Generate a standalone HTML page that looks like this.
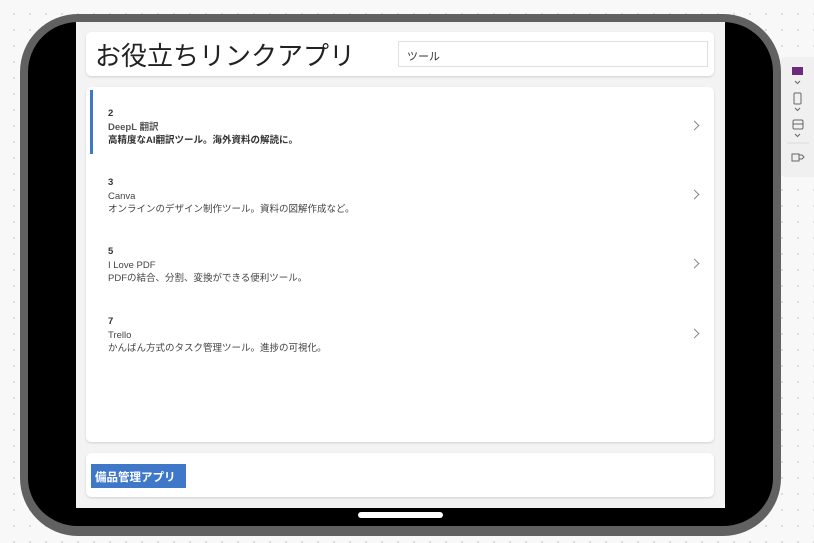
<!DOCTYPE html>
<html><head><meta charset="utf-8"><style>
*{margin:0;padding:0;box-sizing:border-box}
body{width:814px;height:543px;overflow:hidden;background:#f8f8f8;background-image:radial-gradient(#d4d4d4 0.8px,transparent 1px);background-size:16px 16px;background-position:6px 6px;font-family:"Liberation Sans","Noto Sans CJK JP",sans-serif;position:relative}
.frame{position:absolute;left:20px;top:14px;width:761px;height:522px;border-radius:58px;background:#000;border:8px solid #616161;border-bottom-width:10px}
.screen{position:absolute;left:76px;top:22px;width:649px;height:486px;background:#f3f3f3}
.card{position:absolute;background:#fff;border-radius:5px;box-shadow:0 1px 2px rgba(0,0,0,.15)}
.title{position:absolute;left:9px;top:7px;font-size:26px;line-height:34px;color:#222}
.search{position:absolute;left:312px;top:9px;width:310px;height:26px;border:1px solid #e0e0e0;font-size:11px;color:#333;padding:6px 8px}
.item{position:absolute;left:0;width:628px;height:68px;font-size:9.5px;color:#444;line-height:13.5px}
.item .t{padding:20px 0 0 22px}
.item b{font-weight:bold;color:#333}
.chev{position:absolute;right:16px;top:35px;width:7px;height:7px;border-right:1.2px solid #888;border-top:1.2px solid #888;transform:rotate(45deg)}
.btn{position:absolute;left:5px;top:11px;width:95px;height:24px;background:#3f78c8;color:#fff;font-size:11.5px;font-weight:bold;padding:5px 4px}
.side{position:absolute;left:781px;top:57px;width:33px;height:120px;background:#f0f0f0;border-radius:4px 0 0 4px}
.home{position:absolute;left:358px;top:512px;width:85px;height:6px;background:#fff;border-radius:3px}
</style></head><body>
<div class="frame"></div>
<div class="screen">
 <div class="card" style="left:10px;top:10px;width:628px;height:44px">
  <div class="title">お役立ちリンクアプリ</div>
  <div class="search">ツール</div>
 </div>
 <div class="card" style="left:10px;top:65px;width:628px;height:355px">
  <div class="item" style="top:0"><div style="position:absolute;left:4px;top:3px;width:3px;height:64px;background:#3f78c8"></div><div class="t"><b>2</b><br><b style="font-weight:600;color:#555">DeepL 翻訳</b><br><b>高精度なAI翻訳ツール。海外資料の解読に。</b></div><div class="chev"></div></div>
  <div class="item" style="top:69px"><div class="t"><b>3</b><br>Canva<br>オンラインのデザイン制作ツール。資料の図解作成など。</div><div class="chev"></div></div>
  <div class="item" style="top:138px"><div class="t"><b>5</b><br>I Love PDF<br>PDFの結合、分割、変換ができる便利ツール。</div><div class="chev"></div></div>
  <div class="item" style="top:208px"><div class="t"><b>7</b><br>Trello<br>かんばん方式のタスク管理ツール。進捗の可視化。</div><div class="chev"></div></div>
 </div>
 <div class="card" style="left:10px;top:431px;width:628px;height:44px">
  <div class="btn">備品管理アプリ</div>
 </div>
</div>
<div class="home"></div>
<div class="side">
 <svg width="33" height="120" viewBox="0 0 33 120" fill="none" stroke="#666" stroke-width="1">
  <rect x="11" y="10" width="11" height="8" fill="#6b2a7e" stroke="none"/>
  <path d="M14 24l2.5 2.5 2.5-2.5"/>
  <rect x="13" y="36" width="7" height="11" rx="1"/>
  <path d="M14 51l2.5 2.5 2.5-2.5"/>
  <rect x="12" y="63" width="10" height="9" rx="1.5"/><path d="M12 67h10"/>
  <path d="M14 77l2.5 2.5 2.5-2.5"/>
  <path d="M6 86h22" stroke="#ddd"/>
  <rect x="11" y="97" width="7" height="7"/><path d="M18 98h3l2 2-2 2h-3"/>
 </svg>
</div>
</body></html>
